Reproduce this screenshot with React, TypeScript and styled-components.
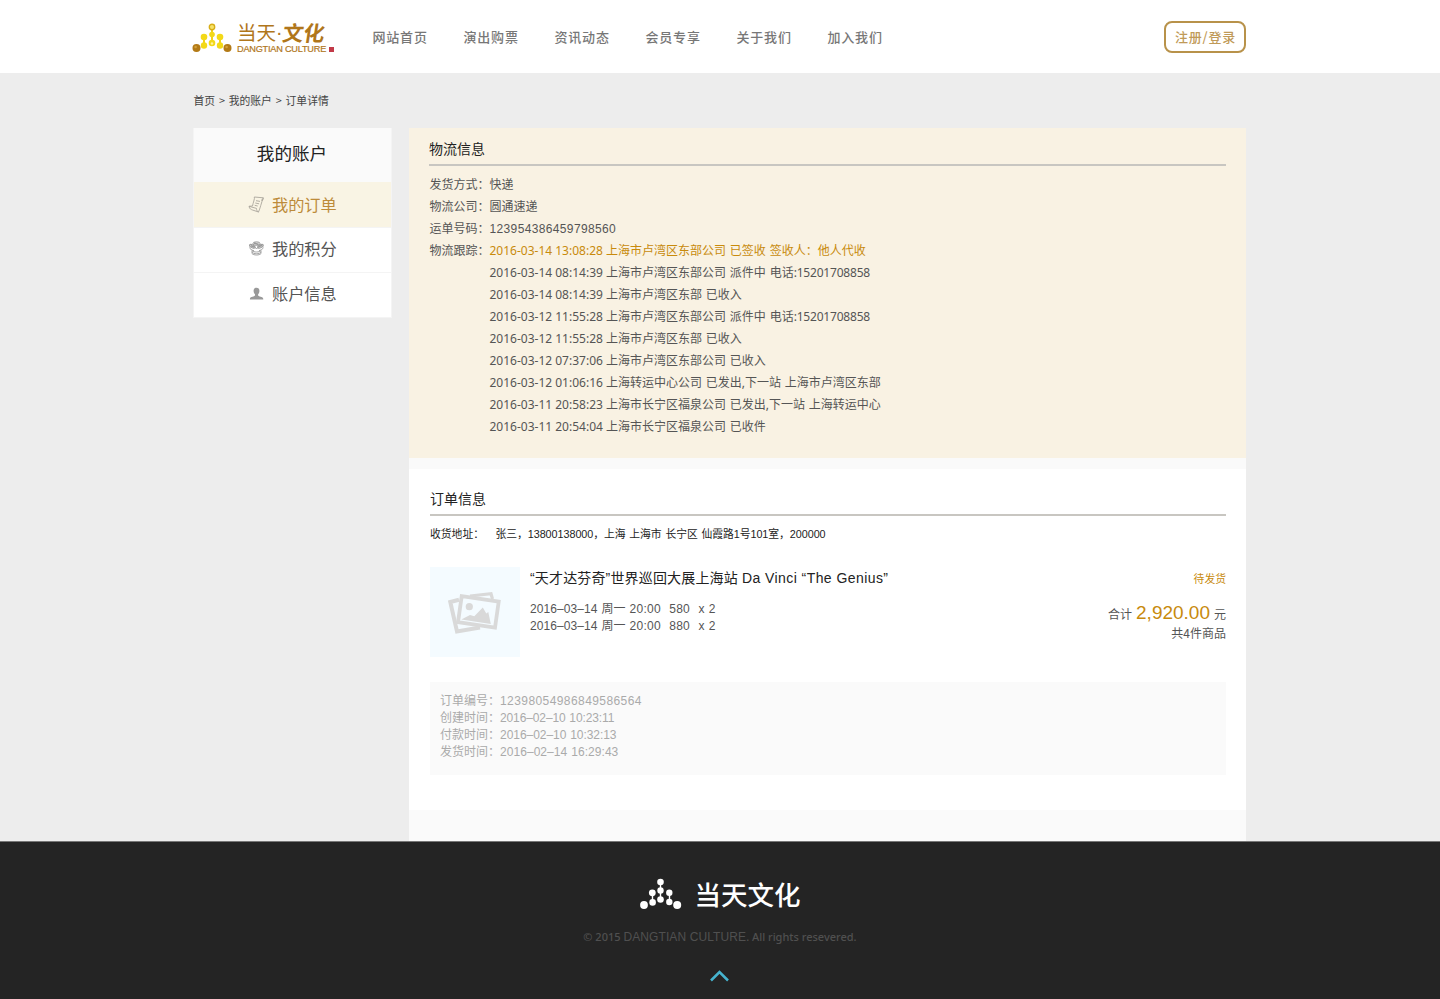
import React from "react";
import styled, { createGlobalStyle } from "styled-components";

const cjk = `"Noto Sans CJK SC", sans-serif`;

const GlobalStyle = createGlobalStyle`
  * { box-sizing: border-box; }
  body { margin: 0; background: #ededed; font-family: ${cjk}; font-size: 12px; color: #555; }
  #root { overflow: hidden; height: 999px; }
  svg { display: block; flex: none; }
`;

const Page = styled.div`
  display: flex;
  flex-direction: column;
  width: 1440px;
  height: 999px;
`;

const Header = styled.header`
  display: flex;
  align-items: flex-start;
  height: 73px;
  padding: 21px 194px 0 192px;
  background: #fff;
`;

const Brand = styled.div`
  display: flex;
  width: 180px;
  height: 34px;
  padding-top: 2px;
`;

const BrandText = styled.div`
  padding-left: 5px;
`;

const BrandName = styled.div`
  display: flex;
  align-items: center;
  height: 18px;
  font-size: 19.5px;
  line-height: 18px;
  color: #b0761b;
  white-space: nowrap;
`;

const BrandDot = styled.span`
  width: 7px;
  font-family: "Liberation Sans", sans-serif;
`;

const BrandScript = styled.span`
  font-weight: 700;
  font-size: 21px;
  transform: skewX(-9deg);
`;

const BrandLatin = styled.div`
  display: flex;
  align-items: center;
  gap: 3px;
  height: 10px;
  margin-top: 3px;
  font: 9.2px/10px "Liberation Sans", sans-serif;
  letter-spacing: -0.23px;
  color: #b0761b;
  -webkit-text-stroke: 0.2px #b0761b;
  white-space: nowrap;
`;

const Seal = styled.i`
  width: 5px;
  height: 5px;
  background: #c23a48;
`;

const Nav = styled.nav`
  display: flex;
  gap: 36px;
  flex: 1;
  padding: 6px 0 0 0.5px;
`;

const NavLink = styled.a`
  width: 55px;
  font-size: 13px;
  line-height: 20px;
  font-weight: 500;
  letter-spacing: 0.8px;
  color: #777;
  white-space: nowrap;
`;

const LoginButton = styled.button`
  width: 82px;
  height: 32px;
  padding: 0 0 0 1px;
  border: 2px solid #b8924a;
  border-radius: 8px;
  background: #fff;
  font: 500 13px/28px ${cjk};
  letter-spacing: 0.8px;
  color: #c09a58;
  white-space: nowrap;
`;

const Body = styled.div`
  display: flex;
  flex-direction: column;
  height: 768px;
  padding: 0 194px 0 193px;
`;

const Breadcrumb = styled.div`
  height: 55px;
  padding: 18px 0 0 0.5px;
  font-size: 10.8px;
  line-height: 18px;
  color: #444;
  word-spacing: 1.4px;
`;

const Columns = styled.div`
  display: flex;
  gap: 17px;
  flex: 1;
`;

const Sidebar = styled.aside`
  width: 199px;
  height: 190px;
  border: solid #f4f4f4;
  border-width: 0 1px;
  background: #fff;
`;

const SidebarTitle = styled.div`
  height: 54px;
  padding-right: 1px;
  background: #fafafa;
  font-size: 17.6px;
  line-height: 50px;
  text-align: center;
  color: #222;
`;

const SidebarItem = styled.a<{ $active?: boolean }>`
  display: flex;
  align-items: center;
  gap: 7px;
  height: ${(p) => (p.$active ? 46 : 45)}px;
  padding: 0 0 ${(p) => (p.$active ? 1 : 3)}px 54px;
  border-bottom: 1px solid #f4f4f4;
  background: ${(p) => (p.$active ? "#f9f4e4" : "#fff")};
  color: ${(p) => (p.$active ? "#bd8b3a" : "#555")};
  font-size: 16.2px;
  line-height: 41px;
`;

const Main = styled.main`
  display: flex;
  flex-direction: column;
  gap: 11px;
  width: 837px;
  background: #fafafa;
`;

const Shipping = styled.section`
  height: 330px;
  padding: 10px 20px 0;
  background: #f9f2e3;
`;

const Order = styled.section`
  height: 341px;
  padding: 19px 20px 0 21px;
  background: #fff;
`;

const SectionTitle = styled.h2`
  margin: 0;
  height: 28px;
  border-bottom: 2px solid #c8c6c1;
  font-size: 14px;
  font-weight: 400;
  line-height: 20px;
  color: #222;
`;

const Facts = styled.dl`
  display: grid;
  grid-template-columns: 60px 1fr;
  grid-auto-rows: 22px;
  margin: 7px 0 0;
  padding-left: 0.5px;
  line-height: 22px;
`;

const Label = styled.dt`
  grid-column: 1;
`;

const Value = styled.dd`
  grid-column: 2;
  margin: 0;
`;

const Num = styled.span<{ $track?: number }>`
  font-family: "Liberation Sans", ${cjk};
  letter-spacing: ${(p) => p.$track ?? 0}px;
`;

const Event = styled(Value)<{ $latest?: boolean }>`
  display: flex;
  height: 22px;
  padding-top: 1px;
  font-family: "Noto Sans", ${cjk};
  color: ${(p) => (p.$latest ? "#c88a0c" : "#555")};
  white-space: pre;
`;

const EventText = styled.span`
  word-spacing: 0.7px;
`;

const Phone = styled.span`
  letter-spacing: -0.2px;
`;

const Address = styled.div`
  display: flex;
  height: 51px;
  padding-top: 9px;
  font-size: 10.8px;
  line-height: 18px;
  word-spacing: 0.9px;
  color: #222;
`;

const AddressLabel = styled.span`
  width: 65.5px;
  font-family: "Liberation Sans", ${cjk};
`;

const Product = styled.div`
  display: flex;
  height: 115px;
`;

const Thumb = styled.div`
  display: flex;
  align-items: center;
  justify-content: center;
  width: 90px;
  height: 90px;
  background: #f4fbff;
`;

const ProductInfo = styled.div`
  flex: 1;
  padding-left: 10px;
  line-height: 17px;
  white-space: pre;
`;

const ProductName = styled.div`
  height: 32px;
  font-family: "Liberation Sans", ${cjk};
  font-size: 14px;
  letter-spacing: 0.16px;
  line-height: 22px;
  color: #222;
`;

const LatinTitle = styled.span`
  letter-spacing: 0.43px;
`;

const Row = styled.div`
  height: 17px;
  word-spacing: 0.6px;
`;

const Summary = styled.div`
  text-align: right;
`;

const Status = styled.div`
  height: 32px;
  font-size: 10.8px;
  line-height: 23px;
  color: #c88a0c;
`;

const Total = styled.div`
  height: 26px;
  line-height: 29px;
  word-spacing: 1.3px;
`;

const Amount = styled.strong`
  font: 400 19px/26px "Liberation Sans", sans-serif;
  color: #c88a0c;
`;

const Count = styled.div`
  line-height: 16px;
`;

const Meta = styled.div`
  height: 93px;
  padding: 9px 10px;
  background: #fafafa;
  line-height: 17px;
  color: #aaa;
`;

const Footer = styled.footer`
  display: flex;
  flex-direction: column;
  align-items: center;
  height: 158px;
  border-top: 1px solid #777;
  background: #242424;
`;

const FooterBrand = styled.div`
  display: flex;
  gap: 13px;
  height: 84px;
  padding-top: 36px;
  font-size: 26.5px;
  font-weight: 500;
  line-height: 31px;
  color: #fff;
`;

const Copyright = styled.div`
  height: 43px;
  font: 500 11px/22px "Noto Sans", sans-serif;
  color: #505050;
  white-space: nowrap;
`;

const CopyrightName = styled.span`
  font: 12px "Liberation Sans", sans-serif;
  letter-spacing: 0.1px;
`;

const GoldMark = () => (
  <svg width="40" height="31" viewBox="0 0 40 31">
    <g stroke="#f0d21c" strokeWidth="2">
      <path d="M20 4v17M12 13v9M28 13v9" />
    </g>
    <g fill="#f3d918">
      <circle cx="20" cy="11.5" r="2.8" /><circle cx="20" cy="20" r="3.3" />
      <circle cx="12" cy="14" r="3.3" /><circle cx="12" cy="22.5" r="3.2" />
      <circle cx="28" cy="14" r="3.3" /><circle cx="28" cy="22.5" r="3.2" />
    </g>
    <circle cx="20" cy="4" r="2.7" fill="#f6e36a" stroke="#d8ae18" strokeWidth="1.4" />
    <circle cx="20" cy="20.5" r="1.2" fill="#fff3a0" />
    <circle cx="4.5" cy="25" r="4" fill="#b37a16" /><circle cx="35.5" cy="25" r="4" fill="#b37a16" />
    <circle cx="3.6" cy="24" r="1.3" fill="#d3a13b" /><circle cx="34.6" cy="24" r="1.3" fill="#d3a13b" />
  </svg>
);

const WhiteMark = () => (
  <svg width="42" height="32" viewBox="0 0 42 32">
    <path d="M20.5 4v18M12.5 14v10M29.5 14v10" stroke="#fff" strokeWidth="1.4" />
    <g fill="#fff">
      <circle cx="20.5" cy="4" r="3.3" /><circle cx="20.5" cy="12.5" r="3.2" /><circle cx="20.5" cy="21.5" r="3.3" />
      <circle cx="12.3" cy="14.8" r="3.4" /><circle cx="12.6" cy="24.4" r="3.3" />
      <circle cx="29.3" cy="14.8" r="3.2" /><circle cx="29.3" cy="24" r="3.2" />
      <circle cx="4" cy="27" r="3.9" /><circle cx="37.2" cy="27" r="4" />
    </g>
  </svg>
);

const OrderIcon = () => (
  <svg width="17" height="17" viewBox="0 0 17 17" fill="none" stroke="#aaa69c" strokeWidth="0.9" strokeLinejoin="round">
    <path d="M6.3 1 15.3 1.8 14.6 4.3 13 4M6.3 1C7 2.5 5 7 4.5 10L1 10.3C1.5 13 3 13.5 4.5 14L10.5 16C12 13 13.5 6 15.3 1.8M1 10.3 8.5 12.4C8.5 14 9.3 15.7 10.5 16M8 4.7l4 .7M7.3 7l3.8.8M6.7 9.3l3 .7" />
  </svg>
);

const PointsIcon = () => (
  <svg width="17" height="17" viewBox="0 0 17 17" fill="none" stroke="#999" strokeWidth="0.9">
    <ellipse cx="8.5" cy="3.6" rx="3.6" ry="1.8" fill="#ddd" />
    <ellipse cx="4.3" cy="6.3" rx="3" ry="1.5" fill="#ccc" transform="rotate(25 4.3 6.3)" />
    <ellipse cx="12.5" cy="6.2" rx="3" ry="1.5" fill="#ccc" transform="rotate(-25 12.5 6.2)" />
    <path d="M1.5 7.5c.5 1.500 2 2.700 4.500 3.200M15.300 7.500c-.5 1.700-2 2.500-4.300 3.200M5.500 5.500l3 3.500 3.300-3.500" />
    <path d="M4 10.500v3c1.500 2 7.500 2 9 0v-3M4 10.500c1.500 2 7.500 2 9 0M4 12.200c1.500 2 7.500 2 9 0" />
    <path d="m6 3 4.500 1.500M3 5.700l3 1.500M11 6.700l3-1.500" strokeWidth="1.4" />
  </svg>
);

const UserIcon = () => (
  <svg width="17" height="17" viewBox="0 0 17 17" fill="#999">
    <path d="M8.5 2.700c-2 0-3 1.400-2.900 3.300.1 1.700.7 2.600 1.400 3.300v1.200c-.6 1-4.600 1.300-5 2.800L1.900 14.500h13.400l-.2-1.200c-.4-1.500-4.400-1.800-5-2.800V9.300c.7-.7 1.200-1.600 1.300-3.300.1-1.900-.9-3.300-2.900-3.300z" />
  </svg>
);

const PicturesIcon = () => (
  <svg width="54" height="46" viewBox="0 -1 54 46" fill="none">
    <path d="M11 9.700 2.300 12 9 41.500 32 37.500" stroke="#d9d9d9" strokeWidth="4" />
    <path d="M22 6 43 3.700 44.500 9" stroke="#d9d9d9" strokeWidth="3.2" />
    <path d="M13.700 6.200 50.700 11.700 47 37.700 10 32.200z" fill="#f4fbff" stroke="#d9d9d9" strokeWidth="3.8" />
    <circle cx="21.3" cy="16.7" r="3.6" fill="#d9d9d9" />
    <path d="M13.300 29.500 22 25 26.300 26.300 34.800 17.500 38.300 23.500 40.300 22 42.800 34z" fill="#d9d9d9" />
  </svg>
);

const nav = ["网站首页", "演出购票", "资讯动态", "会员专享", "关于我们", "加入我们"];

const events: [string, string, string?][] = [
  ["2016-03-14 13:08:28 ", "上海市卢湾区东部公司 已签收 签收人：他人代收"],
  ["2016-03-14 08:14:39 ", "上海市卢湾区东部公司 派件中 电话", ":15201708858"],
  ["2016-03-14 08:14:39 ", "上海市卢湾区东部 已收入"],
  ["2016-03-12 11:55:28 ", "上海市卢湾区东部公司 派件中 电话", ":15201708858"],
  ["2016-03-12 11:55:28 ", "上海市卢湾区东部 已收入"],
  ["2016-03-12 07:37:06 ", "上海市卢湾区东部公司 已收入"],
  ["2016-03-12 01:06:16 ", "上海转运中心公司 已发出,下一站 上海市卢湾区东部"],
  ["2016-03-11 20:58:23 ", "上海市长宁区福泉公司 已发出,下一站 上海转运中心"],
  ["2016-03-11 20:54:04 ", "上海市长宁区福泉公司 已收件"],
];

const prices = ["580", "880"];

const meta: [string, string, number][] = [
  ["订单编号：", "12398054986849586564", 0.42],
  ["创建时间：", "2016–02–10 10:23:11", -0.12],
  ["付款时间：", "2016–02–10 10:32:13", -0.05],
  ["发货时间：", "2016–02–14 16:29:43", 0.05],
];

export default function App() {
  return (
    <Page>
      <GlobalStyle />
      <Header>
        <Brand>
          <GoldMark />
          <BrandText>
            <BrandName>当天<BrandDot>·</BrandDot><BrandScript>文化</BrandScript></BrandName>
            <BrandLatin>DANGTIAN CULTURE<Seal /></BrandLatin>
          </BrandText>
        </Brand>
        <Nav>{nav.map((n) => <NavLink key={n}>{n}</NavLink>)}</Nav>
        <LoginButton>注册/登录</LoginButton>
      </Header>
      <Body>
        <Breadcrumb>首页 &gt; 我的账户 &gt; 订单详情</Breadcrumb>
        <Columns>
          <Sidebar>
            <SidebarTitle>我的账户</SidebarTitle>
            <SidebarItem $active><OrderIcon />我的订单</SidebarItem>
            <SidebarItem><PointsIcon />我的积分</SidebarItem>
            <SidebarItem><UserIcon />账户信息</SidebarItem>
          </Sidebar>
          <Main>
            <Shipping>
              <SectionTitle>物流信息</SectionTitle>
              <Facts>
                <Label>发货方式：</Label><Value>快递</Value>
                <Label>物流公司：</Label><Value>圆通速递</Value>
                <Label>运单号码：</Label><Value><Num $track={0.36}>123954386459798560</Num></Value>
                <Label>物流跟踪：</Label>
                {events.map(([time, text, phone], i) => (
                  <Event key={i} $latest={i === 0}>
                    <span>{time}</span>
                    <EventText>{text}</EventText>
                    {phone && <Phone>{phone}</Phone>}
                  </Event>
                ))}
              </Facts>
            </Shipping>
            <Order>
              <SectionTitle>订单信息</SectionTitle>
              <Address>
                <AddressLabel>收货地址：</AddressLabel>
                <Num $track={-0.05}>张三，13800138000，上海 上海市 长宁区 仙霞路1号101室，200000</Num>
              </Address>
              <Product>
                <Thumb><PicturesIcon /></Thumb>
                <ProductInfo>
                  <ProductName>“天才达芬奇”世界巡回大展上海站 <LatinTitle>Da Vinci “The Genius”</LatinTitle></ProductName>
                  {prices.map((price) => (
                    <Row key={price}>
                      <Num $track={0.07}>2016–03–14 周一 </Num>
                      <Num $track={0.25}>20:00  {price}  x 2</Num>
                    </Row>
                  ))}
                </ProductInfo>
                <Summary>
                  <Status>待发货</Status>
                  <Total>合计 <Amount>2,920.00</Amount> 元</Total>
                  <Count>共4件商品</Count>
                </Summary>
              </Product>
              <Meta>
                {meta.map(([label, value, track]) => (
                  <Row key={label}>{label}<Num $track={track}>{value}</Num></Row>
                ))}
              </Meta>
            </Order>
          </Main>
        </Columns>
      </Body>
      <Footer>
        <FooterBrand><WhiteMark />当天文化</FooterBrand>
        <Copyright>© 2015 <CopyrightName>DANGTIAN CULTURE</CopyrightName>. All rights resevered.</Copyright>
        <svg width="20" height="14" viewBox="0 0 20 14" fill="none" stroke="#46b4cf" strokeWidth="2.5">
          <path d="M1 11.500 9.500 3l8.500 8.500" />
        </svg>
      </Footer>
    </Page>
  );
}
